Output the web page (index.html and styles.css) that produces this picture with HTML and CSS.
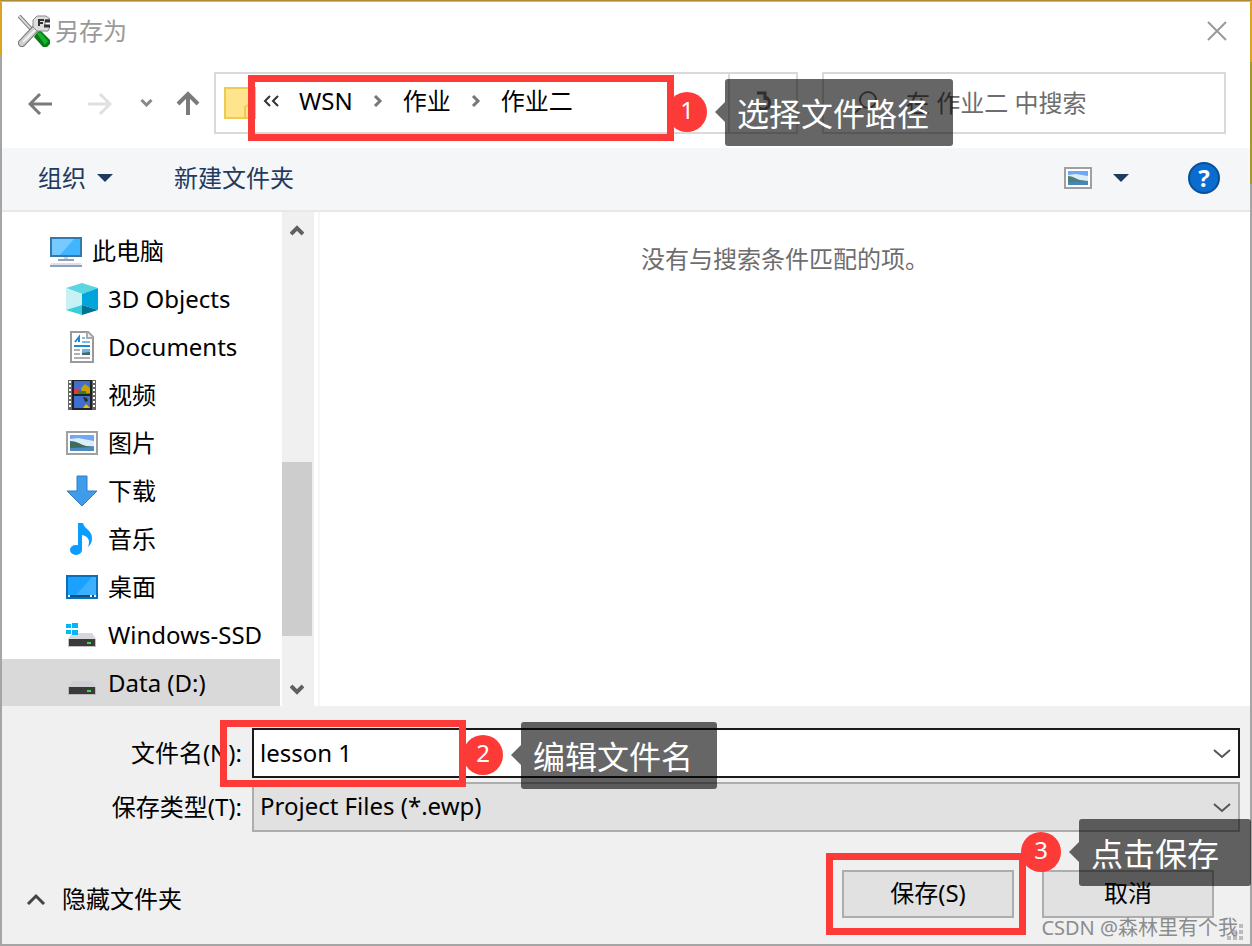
FILE: index.html
```html
<!DOCTYPE html>
<html lang="zh-CN">
<head>
	<meta charset="UTF-8">
	<meta name="viewport" content="width=device-width, initial-scale=1.0">
	<title>另存为</title>

	<link rel="stylesheet" href="styles.css">
</head>
<body>

	<form class="dialog">
		<header class="titlebar">
			<svg class="app-icon" viewBox="0 0 32 32">
				<path d="M18 19l4-4 10 10v4l-3 3h-4l-9-10z" fill="#087a14"/>
				<path d="M19 19l3-2 8 9-3 4z" fill="#14b42c"/>
				<path d="M1 1l16 17" stroke="#777" stroke-width="4"/>
				<path d="M1 1l16 17" stroke="#d8d8d8" stroke-width="2"/>
				<path d="M4 28L20 11" stroke="#777" stroke-width="8" stroke-linecap="round"/>
				<path d="M4 28L20 11" stroke="#cfcfcf" stroke-width="6" stroke-linecap="round"/>
				<path d="M5 27L19 13" stroke="#f2f2f2" stroke-width="2"/>
				<path d="M19 1h9l4 3-5 1v6l5 1-2 4H19l-4-4V5z" fill="#dedede" stroke="#888"/>
				<path d="M21 11V5h5M21 8h4" fill="none" stroke="#333" stroke-width="2"/>
				<path d="M27 6h5M26 11h6" stroke="#333" stroke-width="3"/>
			</svg>
			<h1>另存为</h1>
			<button class="close" type="button" aria-label="关闭">
				<svg viewBox="0 0 20 20"><path d="M1 1l18 18M19 1L1 19" stroke="#999" stroke-width="2"/></svg>
			</button>
		</header>

		<nav class="navbar">
			<button class="back" type="button" aria-label="后退">
				<svg viewBox="0 0 24 24"><path d="M24 13H2M12 3L2 13l10 10" fill="none" stroke="#7a7a7a" stroke-width="3"/></svg>
			</button>
			<button class="forward" type="button" aria-label="前进">
				<svg viewBox="0 0 24 24"><path d="M0 13h22M12 3l10 10-10 10" fill="none" stroke="#e0e0e0" stroke-width="3"/></svg>
			</button>
			<button class="recent" type="button" aria-label="最近浏览的位置">
				<svg viewBox="0 0 12 8"><path d="M1 1l5 5 5-5" fill="none" stroke="#888" stroke-width="3"/></svg>
			</button>
			<button class="up" type="button" aria-label="上移">
				<svg viewBox="0 0 24 24"><path d="M12 24V3M2 13L12 3l10 10" fill="none" stroke="#7a7a7a" stroke-width="4"/></svg>
			</button>

			<div class="address">
				<svg class="folder" viewBox="0 0 32 32">
					<path d="M1 1h30v30H1z" fill="#ffe48e" stroke="#eecb4e" stroke-width="2"/>
					<path d="M21 31V20l3-2" fill="none" stroke="#eecb4e" stroke-width="2"/>
				</svg>
				<ol class="crumbs">
					<li><svg class="more" viewBox="0 0 16 12"><path d="M7 1L2 6l5 5M15 1l-5 5 5 5" fill="none" stroke="#333" stroke-width="2"/></svg></li>
					<li><a href="#">WSN</a></li>
					<li><svg class="sep" viewBox="0 0 10 12"><path d="M2 1l5 5-5 5" fill="none" stroke="#777" stroke-width="3"/></svg></li>
					<li><a href="#">作业</a></li>
					<li><svg class="sep" viewBox="0 0 10 12"><path d="M2 1l5 5-5 5" fill="none" stroke="#777" stroke-width="3"/></svg></li>
					<li><a href="#">作业二</a></li>
				</ol>
				<button class="refresh" type="button" aria-label="刷新">
					<svg viewBox="0 0 20 24"><path d="M4 4h8v7M12 8c6 2 6 10 0 12-5 1-8-2-8-6" fill="none" stroke="#777" stroke-width="3"/></svg>
				</button>
				<div class="mark mark-path"></div>
				<div class="note note-path"><span class="badge">1</span><span class="tip">选择文件路径</span></div>
			</div>

			<label class="search">
				<svg viewBox="0 0 28 24"><circle cx="18" cy="9" r="8" fill="none" stroke="#777" stroke-width="2"/><path d="M12 15l-8 8" stroke="#777" stroke-width="2"/></svg>
				<input type="search" placeholder="在 作业二 中搜索" aria-label="搜索">
			</label>
		</nav>

		<div class="toolbar">
			<button class="organize" type="button">组织 <svg class="caret" viewBox="0 0 16 8"><path d="M0 0h16L8 8z" fill="#1f3b60"/></svg></button>
			<button class="new-folder" type="button">新建文件夹</button>
			<button class="view" type="button" aria-label="更改视图">
				<svg class="view-icon" viewBox="0 0 28 22">
					<path d="M1 1h26v20H1z" fill="#fff" stroke="#a0a0a0" stroke-width="2"/>
					<path d="M4 4h20v14H4z" fill="#6ea9f7"/>
					<path d="M4 8l8-1 12 2v5H4z" fill="#dcecf8"/>
					<path d="M4 9c5 0 8 3 12 4l8 1v2H4z" fill="#4e7f72"/>
					<path d="M4 15l20-1v4H4z" fill="#4585b8"/>
				</svg>
				<svg class="caret" viewBox="0 0 16 8"><path d="M0 0h16L8 8z" fill="#1f3b60"/></svg>
			</button>
			<button class="help" type="button" aria-label="帮助">?</button>
		</div>

		<div class="content">
			<ul class="tree">
				<li class="root">
					<svg viewBox="0 0 32 32">
						<path d="M1 3h30v18H1z" fill="#42b5ff" stroke="#3678ab" stroke-width="2"/>
						<path d="M2 4h22L10 20H2z" fill="#76caff"/>
						<path d="M14 22h4v2h-4z" fill="#ccd3de"/>
						<path d="M8 24h16v2H8zM0 30h32v2H0z" fill="#8fa0bb"/>
						<path d="M1 28h30v2H1z" fill="#dbe1ea"/>
					</svg>
					此电脑
				</li>
				<li>
					<svg viewBox="0 0 32 32">
						<path d="M16 0l16 5-16 6L0 5z" fill="#5bd5df"/>
						<path d="M0 5l16 6v11L0 27z" fill="#c9f1f3"/>
						<path d="M32 5l-16 6v11l16 5z" fill="#00a5dc"/>
						<path d="M0 27l16-5v10z" fill="#38cedb"/>
						<path d="M32 27l-16-5v10z" fill="#00718f"/>
					</svg>
					3D Objects
				</li>
				<li>
					<svg viewBox="0 0 32 32">
						<path d="M5 1h17l5 5v25H5z" fill="#fff" stroke="#999" stroke-width="2"/>
						<path d="M21 1v6h6" fill="#eee" stroke="#aaa" stroke-width="2"/>
						<path d="M9 11l4-5v5" fill="none" stroke="#1d87d0" stroke-width="2"/>
						<path d="M16 7h3M16 11h8" stroke="#7cbbe6" stroke-width="2"/>
						<path d="M8 15h16" stroke="#1d87d0" stroke-width="2"/>
						<path d="M8 19h6M8 23h6M8 27h16" stroke="#b0b0b0" stroke-width="2"/>
						<path d="M16 18h8v6h-8z" fill="#79aee0"/>
						<path d="M16 22l8-1v3h-8z" fill="#3e6a63"/>
					</svg>
					Documents
				</li>
				<li>
					<svg viewBox="0 0 32 32">
						<path d="M2 1h28v30H2z" fill="#666"/>
						<path d="M4 2v28M28 2v28" stroke="#fff" stroke-width="2" stroke-dasharray="2 2"/>
						<path d="M6 1h20v30H6z" fill="#222"/>
						<path d="M8 2h16v13H8zM8 17h16v12H8z" fill="#3f6fcf"/>
						<path d="M8 10l4-1 2 5H8z" fill="#e0393c"/>
						<path d="M15 9l4-4 5 4v5h-8z" fill="#c6a300"/>
						<path d="M12 12h8v3h-8z" fill="#3b7a2a"/>
						<path d="M17 18l4 1 1 3-3 1z" fill="#332b2b"/>
						<path d="M17 29l3-4 4 4z" fill="#f2c200"/>
					</svg>
					视频
				</li>
				<li>
					<svg viewBox="0 0 32 32">
						<path d="M1 5h30v22H1z" fill="#fff" stroke="#a0a0a0" stroke-width="2"/>
						<path d="M4 8h24v16H4z" fill="#6ea9f7"/>
						<path d="M4 12l8-1 16 3v5H4z" fill="#dcecf8"/>
						<path d="M4 14c6 0 10 3 16 5l8 1v2H4z" fill="#3d6c61"/>
						<path d="M4 21l24-1v4H4z" fill="#4b8bbf"/>
					</svg>
					图片
				</li>
				<li>
					<svg viewBox="0 0 32 32"><path d="M11 1h10v15h10L16 31 1 16h10z" fill="#3f9cea" stroke="#2f7fc4"/></svg>
					下载
				</li>
				<li>
					<svg viewBox="0 0 32 32">
						<ellipse cx="10" cy="27" rx="6" ry="5" fill="#0a9dff"/>
						<path d="M14 0h3c1 6 9 7 9 15 0 4-1 6-4 9 3-8-1-11-6-12v15h-4V0z" fill="#0a9dff"/>
					</svg>
					音乐
				</li>
				<li>
					<svg viewBox="0 0 32 32">
						<path d="M1 5h30v22H1z" fill="#1ba1ff" stroke="#0a6fb8" stroke-width="2"/>
						<path d="M30 6v18H10L26 6z" fill="#3db0ff"/>
						<path d="M2 24h28v2H2z" fill="#075385"/>
						<path d="M2 24h2v2H2zM24 24h2v2h-2zM28 24h2v2h-2z" fill="#fff"/>
					</svg>
					桌面
				</li>
				<li>
					<svg viewBox="0 0 32 32">
						<path d="M6 14h20l4 6H2z" fill="#d5d7da"/>
						<path d="M0 5h5v4H0zM6 4h6v5H6zM0 11h5v4H0zM6 11h6v5H6z" fill="#00b8f5"/>
						<path d="M2 20h28v8H2z" fill="#c2c2c2"/>
						<path d="M3 20h26v7H3z" fill="#3a3a3a"/>
						<path d="M21 23h4v2h-4z" fill="#37e04a"/>
					</svg>
					Windows-SSD
				</li>
				<li class="selected">
					<svg viewBox="0 0 32 32">
						<path d="M6 14h20l4 6H2z" fill="#cfd1d4"/>
						<path d="M2 20h28v8H2z" fill="#b9b9b9"/>
						<path d="M3 20h26v7H3z" fill="#3a3a3a"/>
						<path d="M21 23h4v2h-4z" fill="#37e04a"/>
					</svg>
					Data (D:)
				</li>
			</ul>
			<div class="scrollbar">
				<svg viewBox="0 0 14 12"><path d="M1 10l6-6 6 6" fill="none" stroke="#606060" stroke-width="4"/></svg>
				<div class="thumb"></div>
				<svg viewBox="0 0 14 12"><path d="M1 2l6 6 6-6" fill="none" stroke="#606060" stroke-width="4"/></svg>
			</div>
			<main class="files">没有与搜索条件匹配的项。</main>
		</div>

		<footer class="footer">
			<div class="fields">
				<label for="filename">文件名(N):</label>
				<div class="field field-name">
					<input id="filename" type="text" value="lesson 1">
					<svg class="chevron" viewBox="0 0 18 12"><path d="M1 3l8 7 8-7" fill="none" stroke="#555" stroke-width="2"/></svg>
					<div class="mark mark-name"></div>
					<div class="note note-name"><span class="badge">2</span><span class="tip">编辑文件名</span></div>
				</div>
				<label for="filetype">保存类型(T):</label>
				<div class="field">
					<select id="filetype">
						<option>Project Files (*.ewp)</option>
					</select>
					<svg class="chevron" viewBox="0 0 18 12"><path d="M1 3l8 7 8-7" fill="none" stroke="#555" stroke-width="2"/></svg>
				</div>
			</div>

			<div class="actions">
				<button class="toggle" type="button">
					<svg viewBox="0 0 18 12"><path d="M1 11l8-8 8 8" fill="none" stroke="#444" stroke-width="3"/></svg>
					隐藏文件夹
				</button>
				<div class="save">
					<button class="btn" type="button">保存(S)</button>
					<div class="mark mark-save"></div>
					<div class="note note-save"><span class="badge">3</span><span class="tip">点击保存</span></div>
				</div>
				<button class="btn" type="button">取消</button>
			</div>

			<svg class="grip" viewBox="0 0 16 16"><path d="M12 0h4v4h-4zM6 6h4v4H6zM12 6h4v4h-4zM0 12h4v4H0zM6 12h4v4H6zM12 12h4v4h-4z" fill="#bbb"/></svg>
			<span class="watermark">CSDN @森林里有个我</span>
		</footer>
	</form>

</body>
</html>
```
FILE: styles.css
```css
* {
	margin: 0;
	padding: 0;
	box-sizing: border-box;
}

body {
	font-family: "Noto Sans", "Noto Sans CJK SC", sans-serif;
	font-size: 24px;
	line-height: 32px;
	color: #000;
}

button, input, select {
	font: inherit;
	color: inherit;
	background: none;
	border: none;
	outline: none;
}

button {
	display: flex;
	align-items: center;
	justify-content: center;
}

svg {
	display: block;
	flex: none;
}

ul, ol {
	list-style: none;
}

a {
	color: inherit;
	text-decoration: none;
}

/* the frame is gold along the top and part of both sides, grey elsewhere */
.dialog {
	display: flex;
	flex-direction: column;
	min-height: 100vh;
	border: 2px solid transparent;
	background:
		linear-gradient(#fff, #fff) padding-box,
		linear-gradient(#b08a35 1px, #f5b221 1px) top / 100% 2px no-repeat border-box,
		linear-gradient(#d9a520 62px, #a89530 62px) top right / 2px 184px no-repeat border-box,
		linear-gradient(#d9a520, #d9a520) top left / 2px 56px no-repeat border-box,
		linear-gradient(#a5a5a5, #a5a5a5) border-box;
}

/* title */
.titlebar {
	display: flex;
	align-items: center;
	gap: 5px;
	height: 58px;
	padding: 0 23px 0 16px;
}

.app-icon {
	width: 32px;
	height: 32px;
}

.titlebar h1 {
	flex: 1;
	font-size: 24px;
	font-weight: normal;
	color: #999;
}

.close svg {
	width: 20px;
	height: 20px;
}

/* navigation */
.navbar {
	display: flex;
	align-items: center;
	height: 88px;
	padding: 0 24px 2px 26px;
}

.back svg, .forward svg, .up svg {
	width: 24px;
	height: 24px;
}

.forward {
	margin-left: 36px;
}

.recent {
	margin: 0 23px 0 28px;
}

.recent svg {
	width: 13px;
	height: 8px;
}

.address {
	position: relative;
	display: flex;
	align-items: center;
	flex: 1 1 584px;
	height: 62px;
	margin-left: 14px;
	padding-left: 8px;
	border: 2px solid #d9d9d9;
}

.folder {
	width: 32px;
	height: 32px;
}

.crumbs {
	display: flex;
	align-items: center;
	flex: 1;
	gap: 20px;
	margin-left: 7px;
	padding-bottom: 4px;
}

.more {
	width: 16px;
	height: 12px;
}

.sep {
	width: 10px;
	height: 12px;
}

.refresh {
	align-self: stretch;
	width: 68px;
	padding-bottom: 4px;
	border-left: 2px solid #d9d9d9;
}

.refresh svg {
	width: 20px;
	height: 24px;
}

.search {
	display: flex;
	align-items: center;
	flex: 1 1 404px;
	gap: 28px;
	min-width: 0;
	height: 62px;
	margin-left: 24px;
	padding-left: 26px;
	border: 2px solid #d9d9d9;
}

.search svg {
	width: 28px;
	height: 24px;
}

.search input {
	flex: 1;
	min-width: 0;
}

.search input::placeholder {
	color: #6d6d6d;
}

/* toolbar */
.toolbar {
	display: flex;
	align-items: center;
	height: 64px;
	padding: 0 30px 2px 36px;
	border-bottom: 2px solid #e6e8ea;
	background: #f4f6f8;
	color: #1f3b60;
}

.caret {
	width: 16px;
	height: 8px;
}

.organize {
	gap: 11px;
}

.new-folder {
	margin: 0 auto 0 61px;
}

.view {
	gap: 21px;
}

.view-icon {
	width: 28px;
	height: 22px;
}

.help {
	width: 32px;
	height: 32px;
	margin-left: 59px;
	border: 2px solid #0a4f94;
	border-radius: 50%;
	background: #0a6cce;
	color: #fff;
	font-weight: bold;
}

/* tree and file list */
.content {
	display: flex;
	flex: 1;
}

.tree {
	width: 278px;
	padding-top: 15px;
}

.tree li {
	display: flex;
	align-items: center;
	gap: 10px;
	height: 48px;
	padding-left: 64px;
	white-space: nowrap;
}

.tree .root {
	padding-left: 48px;
}

.tree .selected {
	height: 47px;
	background: #d9d9d9;
}

.tree svg {
	width: 32px;
	height: 32px;
}

.scrollbar {
	display: flex;
	flex-direction: column;
	align-items: center;
	width: 32px;
	margin-left: 2px;
	padding: 12px 2px 10px 0;
	background: #f0f0f0;
}

.scrollbar svg {
	width: 14px;
	height: 12px;
}

.thumb {
	width: 30px;
	height: 174px;
	margin: auto 0 48px;
	background: #cdcdcd;
}

.files {
	flex: 1;
	margin-left: 4px;
	padding-top: 31px;
	border-left: 2px solid #f7f7f7;
	color: #6d6d6d;
	text-align: center;
}

/* footer */
.footer {
	position: relative;
	padding: 22px 10px 26px 24px;
	background: #f0f0f0;
}

.fields {
	display: grid;
	grid-template-columns: 216px 1fr;
	column-gap: 10px;
	row-gap: 4px;
	align-items: center;
}

.fields label {
	text-align: right;
}

.field {
	position: relative;
	display: flex;
	align-items: center;
	height: 50px;
	border: 2px solid #adadad;
	background: #e1e1e1;
}

.field-name {
	border-color: #1a1a1a;
	background: #fff;
}

.field input, .field select {
	width: 100%;
	height: 100%;
	padding: 0 40px 2px 6px;
	appearance: none;
}

.chevron {
	position: absolute;
	right: 7px;
	width: 18px;
	height: 12px;
	pointer-events: none;
}

.actions {
	display: flex;
	align-items: center;
	gap: 28px;
	margin-top: 38px;
	padding-right: 26px;
}

.toggle {
	gap: 16px;
	margin-right: auto;
	padding-top: 10px;
}

.toggle svg {
	width: 20px;
	height: 12px;
}

.save {
	position: relative;
}

.btn {
	width: 172px;
	height: 48px;
	padding-bottom: 2px;
	border: 2px solid #adadad;
	background: #e1e1e1;
}

.grip {
	position: absolute;
	right: 7px;
	bottom: 4px;
	width: 16px;
	height: 16px;
}

.watermark {
	position: absolute;
	right: 12px;
	bottom: 0;
	font-size: 20px;
	color: #8c8c8c;
	white-space: nowrap;
}

/* numbered notes over the dialog */
.mark {
	position: absolute;
	z-index: 1;
	border: 7px solid #fc3a38;
	pointer-events: none;
}

.mark-path {
	top: 1px;
	left: 32px;
	width: 426px;
	height: 66px;
}

.mark-name {
	top: -10px;
	left: -34px;
	width: 246px;
	height: 67px;
}

.mark-save {
	inset: -17px -12px -17px -16px;
}

.note {
	position: absolute;
	z-index: 1;
	display: flex;
	gap: 18px;
	white-space: nowrap;
}

.note-path {
	top: 5px;
	left: 451px;
}

.note-name {
	top: -8px;
	left: 209px;
}

.note-save {
	top: -51px;
	left: 179px;
}

.note-save .tip {
	padding-right: 32px;
}

.badge {
	width: 40px;
	height: 40px;
	margin-top: 13px;
	border-radius: 50%;
	background: #fc3a38;
	color: #fff;
	line-height: 36px;
	text-align: center;
}

.tip {
	position: relative;
	height: 67px;
	padding: 0 24px 0 12px;
	border-radius: 3px;
	background: rgba(0, 0, 0, .6);
	color: #fff;
	font-size: 32px;
	line-height: 69px;
}

.tip::before {
	content: "";
	position: absolute;
	top: 23px;
	left: -10px;
	border: 10px solid transparent;
	border-left: none;
	border-right-color: rgba(0, 0, 0, .6);
}
```
